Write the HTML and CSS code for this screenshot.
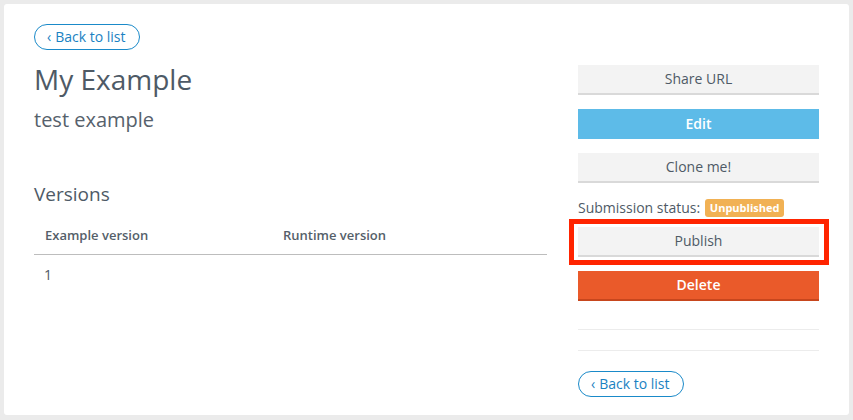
FILE: index.html
```html
<!DOCTYPE html>
<html lang="en">
<head>
<meta charset="utf-8">
<title>My Example</title>
<link rel="stylesheet" href="styles.css">
</head>
<body>
<div class="card">
  <a class="back-btn" href="#"><span class="caret">‹</span> Back to list</a>
  <div class="row">
    <div class="main">
      <h1 class="title">My Example</h1>
      <p class="subtitle">test example</p>
      <h2 class="section-title">Versions</h2>
      <table class="versions">
        <thead>
          <tr><th class="col-a">Example version</th><th>Runtime version</th></tr>
        </thead>
        <tbody>
          <tr><td class="col-a">1</td><td></td></tr>
        </tbody>
      </table>
    </div>
    <div class="side">
      <button class="btn btn-light">Share URL</button>
      <button class="btn btn-info">Edit</button>
      <button class="btn btn-light">Clone me!</button>
      <div class="status">Submission status: <span class="badge">Unpublished</span></div>
      <div class="highlight">
        <button class="btn btn-light btn-flush">Publish</button>
      </div>
      <button class="btn btn-danger">Delete</button>
      <hr class="sep sep-first">
      <hr class="sep">
      <a class="back-btn" href="#"><span class="caret">‹</span> Back to list</a>
    </div>
  </div>
</div>
</body>
</html>
```
FILE: styles.css
```css
* { box-sizing: border-box; }
html, body { margin: 0; padding: 0; }
body {
  background: #ebebeb;
  font-family: "Open Sans", "Noto Sans", "Liberation Sans", sans-serif;
  color: #4e5a66;
  width: 853px;
  height: 420px;
  overflow: hidden;
}
.card {
  margin: 4px;
  width: 845px;
  height: 411px;
  background: #ffffff;
  border-radius: 3px;
  padding: 20px 30px 18px 30px;
}
.back-btn {
  display: inline-flex;
  align-items: center;
  height: 26px;
  padding: 0 13px 1px 12px;
  border: 1px solid #1a8ac9;
  border-radius: 13px;
  color: #1a82c2;
  text-decoration: none;
  font-size: 14px;
  line-height: 20px;
}
.caret { margin-right: 4px; font-size: 14px; }
.row {
  display: grid;
  grid-template-columns: 513px 241px;
  column-gap: 31px;
  margin-top: 13px;
}
.title {
  margin: 0;
  font-size: 28px;
  line-height: 33px;
  font-weight: 400;
  color: #4e5a66;
}
.subtitle {
  margin: 11px 0 0 0;
  font-size: 20px;
  line-height: 26px;
  color: #56616c;
}
.section-title {
  margin: 49px 0 0 0;
  font-size: 19px;
  line-height: 24px;
  font-weight: 400;
  color: #4e5a66;
}
.versions {
  margin-top: 9px;
  width: 513px;
  border-collapse: collapse;
  line-height: 20px;
}
.versions th {
  text-align: left;
  font-size: 13px;
  font-weight: 600;
  color: #555f6a;
  padding: 10px 10px 9px 11px;
  border-bottom: 1px solid #bdbdbd;
}
.versions td {
  text-align: left;
  font-size: 14px;
  color: #4e5a66;
  padding: 10px 10px 10px 10px;
}
.versions .col-a { width: 238px; }
.side {
  display: flex;
  flex-direction: column;
  align-items: stretch;
  padding-top: 2px;
}
.btn {
  display: block;
  width: 241px;
  height: 30px;
  margin: 0 0 14px 0;
  border: 0;
  border-radius: 0;
  font-family: inherit;
  font-size: 14px;
  line-height: 20px;
  padding: 0 0 1px 0;
  text-align: center;
  cursor: pointer;
}
.btn-light {
  background: #f3f3f3;
  color: #4e5a66;
  border-bottom: 2px solid #d9d9d9;
  padding-top: 1px;
}
.btn-info {
  background: #5dbbe8;
  color: #ffffff;
  font-weight: 600;
}
.btn-danger {
  background: #ea5a2a;
  color: #ffffff;
  font-weight: 600;
  border-bottom: 2px solid #c7461d;
  padding-top: 1px;
  margin-bottom: 0;
}
.status {
  margin: 0 0 9px 0;
  font-size: 14px;
  line-height: 21px;
  height: 21px;
  display: flex;
  align-items: center;
  color: #4e5a66;
  white-space: pre;
}
.badge {
  display: inline-block;
  margin-left: 1px;
  height: 18px;
  padding: 0 5px;
  background: #f1b154;
  color: #ffffff;
  font-size: 11px;
  font-weight: 700;
  line-height: 18px;
  border-radius: 3px;
}
.highlight {
  position: relative;
  margin-bottom: 14px;
}
.highlight::after {
  content: "";
  position: absolute;
  top: -8px;
  bottom: -8px;
  left: -9px;
  right: -10px;
  border: 5px solid #ff2400;
  pointer-events: none;
}
.btn-flush { margin: 0; }
.sep {
  margin: 0;
  border: 0;
  height: 1px;
  background: #ececec;
}
.sep-first { margin-top: 28px; margin-bottom: 20px; }
.sep + .back-btn { margin-top: 20px; align-self: flex-start; }
```
